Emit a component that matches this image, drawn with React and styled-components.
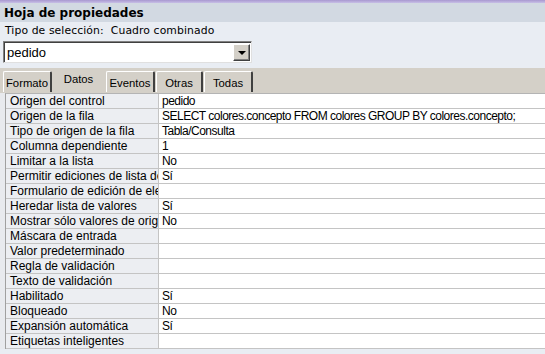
import React from 'react';
import styled, { createGlobalStyle } from 'styled-components';

const Global = createGlobalStyle`
  html, body { margin: 0; padding: 0; background: #e9edf3; }
  * { box-sizing: border-box; }
`;

const rows = [
  ['Origen del control', 'pedido'],
  ['Origen de la fila', 'SELECT colores.concepto FROM colores GROUP BY colores.concepto;'],
  ['Tipo de origen de la fila', 'Tabla/Consulta'],
  ['Columna dependiente', '1'],
  ['Limitar a la lista', 'No'],
  ['Permitir ediciones de lista de valores', 'Sí'],
  ['Formulario de edición de elementos de lista', ''],
  ['Heredar lista de valores', 'Sí'],
  ['Mostrar sólo valores de origen de la fila', 'No'],
  ['Máscara de entrada', ''],
  ['Valor predeterminado', ''],
  ['Regla de validación', ''],
  ['Texto de validación', ''],
  ['Habilitado', 'Sí'],
  ['Bloqueado', 'No'],
  ['Expansión automática', 'Sí'],
  ['Etiquetas inteligentes', ''],
];

const tabs = ['Formato', 'Datos', 'Eventos', 'Otras', 'Todas'];
const tabWidths = [49, 52, 49, 47, 49];

const Sheet = {
  Panel: styled.div`
    width: 545px;
    height: 354px;
    overflow: hidden;
    background: #e9edf3;
    font-family: "DejaVu Sans", Tahoma, sans-serif;
    color: #000;
  `,
  TopEdge: styled.div`
    height: 3px;
    background: linear-gradient(#a898d0, #c8bfe6);
  `,
  Title: styled.div`
    height: 19px;
    background: #d2d9e2;
    font-weight: bold;
    font-size: 12px;
    line-height: 20px;
    padding-left: 4px;
  `,
  Subtitle: styled.div`
    height: 16px;
    font-size: 10.8px;
    line-height: 17px;
    padding-left: 5px;
    letter-spacing: 0.1px;
  `,
  ComboRow: styled.div`
    padding: 3px 0 0 3px;
  `,
  Combo: styled.div`
    width: 249px;
    height: 22px;
    display: flex;
    align-items: center;
    background: #fff;
    border: 1px solid #808080;
    border-right-color: #e0e0e0;
    border-bottom-color: #e0e0e0;
    box-shadow: inset 1px 1px 0 #404040;
    padding: 1px 1px 1px 3px;
  `,
  ComboText: styled.span`
    flex: 1;
    font-family: "Liberation Sans", Arial, sans-serif;
    font-size: 13px;
    padding-top: 1px;
  `,
  DropButton: styled.div`
    width: 17px;
    height: 17px;
    background: #d4d0c8;
    border: 1px solid;
    border-color: #fff #404040 #404040 #fff;
    box-shadow: inset -1px -1px 0 #808080;
    display: flex;
    align-items: center;
    justify-content: center;
  `,
  Arrow: styled.div`
    width: 0;
    height: 0;
    border-left: 4px solid transparent;
    border-right: 4px solid transparent;
    border-top: 4px solid #000;
    margin-top: 1px;
  `,
  TabStrip: styled.div`
    margin-top: 5px;
    height: 25px;
    background: #d4d0c8;
    display: flex;
    align-items: flex-end;
    padding-left: 3px;
  `,
  Tab: styled.div`
    width: ${p => p.$w}px;
    height: ${p => (p.$active ? 23 : 21)}px;
    margin-bottom: ${p => (p.$active ? 0 : 1)}px;
    background: #d4d0c8;
    font-family: "Liberation Sans", Arial, sans-serif;
    font-size: 11.3px;
    display: flex;
    align-items: ${p => (p.$active ? 'flex-start' : 'center')};
    justify-content: center;
    padding-top: 2px;
    border-top: 1px solid ${p => (p.$active ? '#d4d0c8' : '#fff')};
    border-left: 1px solid ${p => (p.$active ? '#d4d0c8' : '#fff')};
    border-right: 2px solid ${p => (p.$active ? '#d4d0c8' : '#404040')};
    border-radius: 2px 2px 0 0;
    margin-right: 1px;
    white-space: nowrap;
    color: #000;
  `,
  Body: styled.div`
    background: #e8eaee;
    padding-left: 5px;
  `,
  Grid: styled.div`
    display: grid;
    grid-template-columns: 153px 1fr;
    border-left: 1px solid #a0a0a0;
    border-top: 1px solid #b4b4b4;
    font-family: "Liberation Sans", Arial, sans-serif;
    font-size: 12px;
  `,
  Label: styled.div`
    height: 15px;
    line-height: 15px;
    padding-left: 4px;
    background: #eceef2;
    border-bottom: 1px solid #c4c4c4;
    border-right: 1px solid #c4c4c4;
    white-space: nowrap;
    overflow: hidden;
  `,
  Value: styled.div`
    height: 15px;
    line-height: 15px;
    padding-left: 3px;
    letter-spacing: -0.5px;
    background: #fff;
    border-bottom: 1px solid #c4c4c4;
    white-space: nowrap;
    overflow: hidden;
  `,
};

export default function App() {
  return (
    <Sheet.Panel>
      <Global />
      <Sheet.TopEdge />
      <Sheet.Title>Hoja de propiedades</Sheet.Title>
      <Sheet.Subtitle>Tipo de selección:&nbsp; Cuadro combinado</Sheet.Subtitle>
      <Sheet.ComboRow>
        <Sheet.Combo>
          <Sheet.ComboText>pedido</Sheet.ComboText>
          <Sheet.DropButton><Sheet.Arrow /></Sheet.DropButton>
        </Sheet.Combo>
      </Sheet.ComboRow>
      <Sheet.TabStrip>
        {tabs.map((t, i) => (
          <Sheet.Tab key={t} $w={tabWidths[i]} $active={t === 'Datos'}>{t}</Sheet.Tab>
        ))}
      </Sheet.TabStrip>
      <Sheet.Body>
        <Sheet.Grid>
          {rows.map(([label, value]) => (
            <React.Fragment key={label}>
              <Sheet.Label>{label}</Sheet.Label>
              <Sheet.Value>{value}</Sheet.Value>
            </React.Fragment>
          ))}
        </Sheet.Grid>
      </Sheet.Body>
    </Sheet.Panel>
  );
}
